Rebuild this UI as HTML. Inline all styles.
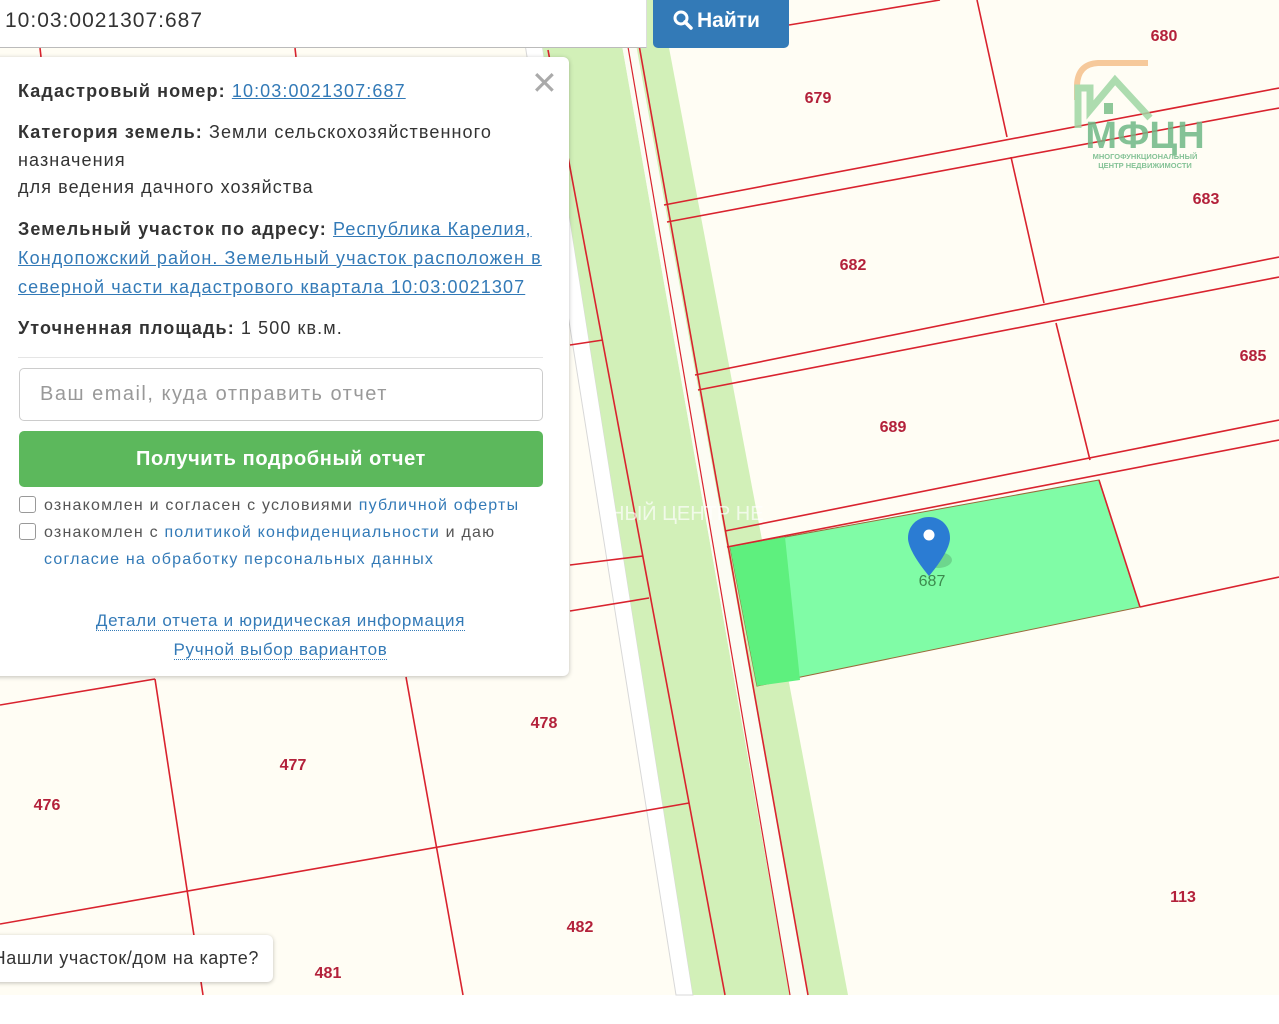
<!DOCTYPE html>
<html><head><meta charset="utf-8">
<style>
*{margin:0;padding:0;box-sizing:border-box}
body{width:1279px;height:1024px;overflow:hidden;background:#fff;font-family:"Liberation Sans",sans-serif;position:relative}
#map{position:absolute;left:0;top:0}
.search{position:absolute;left:0;top:0;width:647px;height:48px;background:#fff;border-bottom:1px solid #bbb;border-right:1px solid #ddd;font-size:21px;letter-spacing:1px;color:#333;padding:9px 0 0 5px}
.btn{position:absolute;left:653px;top:0;width:136px;height:48px;background:#337ab7;border-radius:0 0 5px 5px;color:#fff;font-weight:bold;font-size:21px;padding:9px 0 0 20px}
.btn svg{vertical-align:-3px;margin-right:4px}
.pop{position:absolute;left:-8px;top:57px;width:577px;height:619px;background:#fff;border-radius:6px;box-shadow:0 1px 5px rgba(0,0,0,.25);color:#333}
.pop .c{position:absolute;left:26px;width:527px}
.pop p{font-size:18px;letter-spacing:1.1px;line-height:29px}
b{font-weight:bold}
a{color:#337ab7;text-decoration:underline}
.x{position:absolute;left:539px;top:10px;font-size:32px;color:#aaa;line-height:1}
.hr{position:absolute;left:26px;top:300px;width:525px;border-top:1px solid #e5e5e5}
.inp{position:absolute;left:27px;top:311px;width:524px;height:53px;border:1px solid #ccc;border-radius:5px;font-size:20px;letter-spacing:1.5px;color:#999;padding:14px 0 0 20px}
.gbtn{position:absolute;left:27px;top:374px;width:524px;height:56px;background:#5cb85c;border-radius:5px;color:#fff;font-weight:bold;font-size:20px;letter-spacing:0.6px;text-align:center;line-height:56px}
.cb{position:absolute;left:27px;width:17px;height:17px;border:1px solid #999;border-radius:3px}
.t{position:absolute;left:52px;font-size:16px;letter-spacing:1.2px;color:#555;white-space:nowrap}
.t a,.lk a{text-decoration:none}
.lk{position:absolute;left:0;width:577px;text-align:center;font-size:17px;letter-spacing:0.7px}
.lk a{border-bottom:1px dotted #337ab7}
.tip{position:absolute;left:-10px;top:935px;width:283px;height:47px;background:#fff;border-radius:6px;box-shadow:0 1px 4px rgba(0,0,0,.25);font-size:18px;letter-spacing:0.6px;color:#333;padding:13px 0 0 0;white-space:nowrap;overflow:hidden;direction:rtl;padding-right:14px}
</style></head><body>
<svg id="map" width="1279" height="1024" viewBox="0 0 1279 1024">
<rect x="0" y="0" width="1279" height="995" fill="#fffdf4"/>
<polygon points="518,0 535,0 693,995 676,995" fill="#fff" stroke="#d8d8d8" stroke-width="1"/>
<polygon points="535,0 614,0 790,995 693,995" fill="#d2f0b8"/>
<polygon points="614,0 628,0 808,995 790,995" fill="#fcfcf4"/>
<polygon points="628,0 660,0 848,995 808,995" fill="#d2f0b8"/>
<polygon points="730,547 1099,480 1140,607 757,686" fill="#80fca6" stroke="#9a6a3a" stroke-width="1"/>
<polygon points="730,547 785,537 800,680 757,686" fill="#5ef07e"/>
<g stroke="#d9232e" stroke-width="1.6" fill="none">
<line x1="548" y1="50" x2="725" y2="995"/>
<line x1="620" y1="0" x2="790" y2="995" stroke-width="1.2"/>
<line x1="631" y1="0" x2="808" y2="995"/>
<line x1="789" y1="25" x2="940" y2="0"/>
<line x1="664" y1="205" x2="1279" y2="88"/>
<line x1="667" y1="222" x2="1279" y2="108"/>
<line x1="695" y1="375" x2="1279" y2="257"/>
<line x1="698" y1="390" x2="1279" y2="277"/>
<line x1="725" y1="531" x2="1279" y2="420"/>
<line x1="727" y1="547" x2="1279" y2="440"/>
<line x1="1140" y1="607" x2="1279" y2="577"/>
<line x1="977" y1="0" x2="1007" y2="137"/>
<line x1="1011" y1="157" x2="1044" y2="303"/>
<line x1="1056" y1="323" x2="1090" y2="460"/>
<line x1="1099" y1="480" x2="1140" y2="607"/>
<line x1="570" y1="345" x2="603" y2="340"/>
<line x1="570" y1="565" x2="643" y2="556"/>
<line x1="570" y1="611" x2="649" y2="598"/>
<line x1="0" y1="705" x2="155" y2="679"/>
<line x1="155" y1="679" x2="203" y2="995"/>
<line x1="406" y1="677" x2="463" y2="995"/>
<line x1="0" y1="924" x2="689" y2="803"/>
<line x1="40" y1="48" x2="41" y2="57"/>
<line x1="295" y1="48" x2="296" y2="57"/>
</g>
<g font-family="Liberation Sans, sans-serif" font-weight="bold" font-size="16" fill="#b3213a" text-anchor="middle">
<text x="1164" y="41">680</text><text x="818" y="103">679</text><text x="1206" y="204">683</text>
<text x="853" y="270">682</text><text x="1253" y="361">685</text><text x="893" y="432">689</text>
<text x="544" y="728">478</text><text x="293" y="770">477</text><text x="47" y="810">476</text>
<text x="580" y="932">482</text><text x="328" y="978">481</text><text x="1183" y="902">113</text>
<text x="932" y="586" fill="#3c8a4e" font-weight="normal">687</text>
</g>
<text x="610" y="520" font-family="Liberation Sans, sans-serif" font-size="20" fill="#fff" opacity=".7">НЫЙ ЦЕНТР НЕ</text>
<ellipse cx="938" cy="560" rx="14" ry="8" fill="#000" opacity=".15"/>
<path d="M929,517 C917,517 908,526 908,538 C908,552 929,576 929,576 C929,576 950,552 950,538 C950,526 941,517 929,517Z" fill="#2b7cd3"/>
<circle cx="929" cy="535" r="5.5" fill="#fff"/>
<g opacity=".85">
<path d="M1148,63 L1098,63 Q1078,64 1077,85 L1077,100" stroke="#f5c08c" stroke-width="6" fill="none"/>
<path d="M1078,128 L1078,88 L1090,88 L1090,110 L1115,80 L1150,118" stroke="#9fd7a4" stroke-width="7" fill="none"/>
<rect x="1104" y="103" width="9" height="11" fill="#7cbf8a"/>
<text x="1145" y="148" text-anchor="middle" font-family="Liberation Sans, sans-serif" font-weight="bold" font-size="38" fill="#6fb886">МФЦН</text>
<text x="1145" y="159" text-anchor="middle" font-family="Liberation Sans, sans-serif" font-weight="bold" font-size="7.5" fill="#6fb886">МНОГОФУНКЦИОНАЛЬНЫЙ</text>
<text x="1145" y="168" text-anchor="middle" font-family="Liberation Sans, sans-serif" font-weight="bold" font-size="7.5" fill="#6fb886">ЦЕНТР НЕДВИЖИМОСТИ</text>
</g>
</svg>
<div class="search">10:03:0021307:687</div>
<div class="btn"><svg width="20" height="20" viewBox="0 0 20 20"><circle cx="8" cy="8" r="6" stroke="#fff" stroke-width="3" fill="none"/><line x1="12" y1="12" x2="18" y2="18" stroke="#fff" stroke-width="3.5" stroke-linecap="round"/></svg>Найти</div>
<div class="pop">
<div class="x">✕</div>
<div class="c" style="top:20px"><p><b>Кадастровый номер:</b> <a>10:03:0021307:687</a></p></div>
<div class="c" style="top:61px"><p><b>Категория земель:</b> Земли сельскохозяйственного</p><p style="line-height:27px">назначения<br>для ведения дачного хозяйства</p></div>
<div class="c" style="top:158px"><p><b>Земельный участок по адресу:</b> <a>Республика Карелия, Кондопожский район. Земельный участок расположен в северной части кадастрового квартала 10:03:0021307</a></p></div>
<div class="c" style="top:257px"><p><b>Уточненная площадь:</b> 1 500 кв.м.</p></div>
<div class="hr"></div>
<div class="inp">Ваш email, куда отправить отчет</div>
<div class="gbtn">Получить подробный отчет</div>
<div class="cb" style="top:439px"></div>
<div class="t" style="top:440px">ознакомлен и согласен с условиями <a>публичной оферты</a></div>
<div class="cb" style="top:466px"></div>
<div class="t" style="top:467px">ознакомлен с <a>политикой конфиденциальности</a> и даю</div>
<div class="t" style="top:494px"><a>согласие на обработку персональных данных</a></div>
<div class="lk" style="top:554px"><a>Детали отчета и юридическая информация</a></div>
<div class="lk" style="top:583px"><a>Ручной выбор вариантов</a></div>
</div>
<div class="tip"><span style="direction:ltr;unicode-bidi:embed">Нашли участок/дом на карте?</span></div>
</body></html>
